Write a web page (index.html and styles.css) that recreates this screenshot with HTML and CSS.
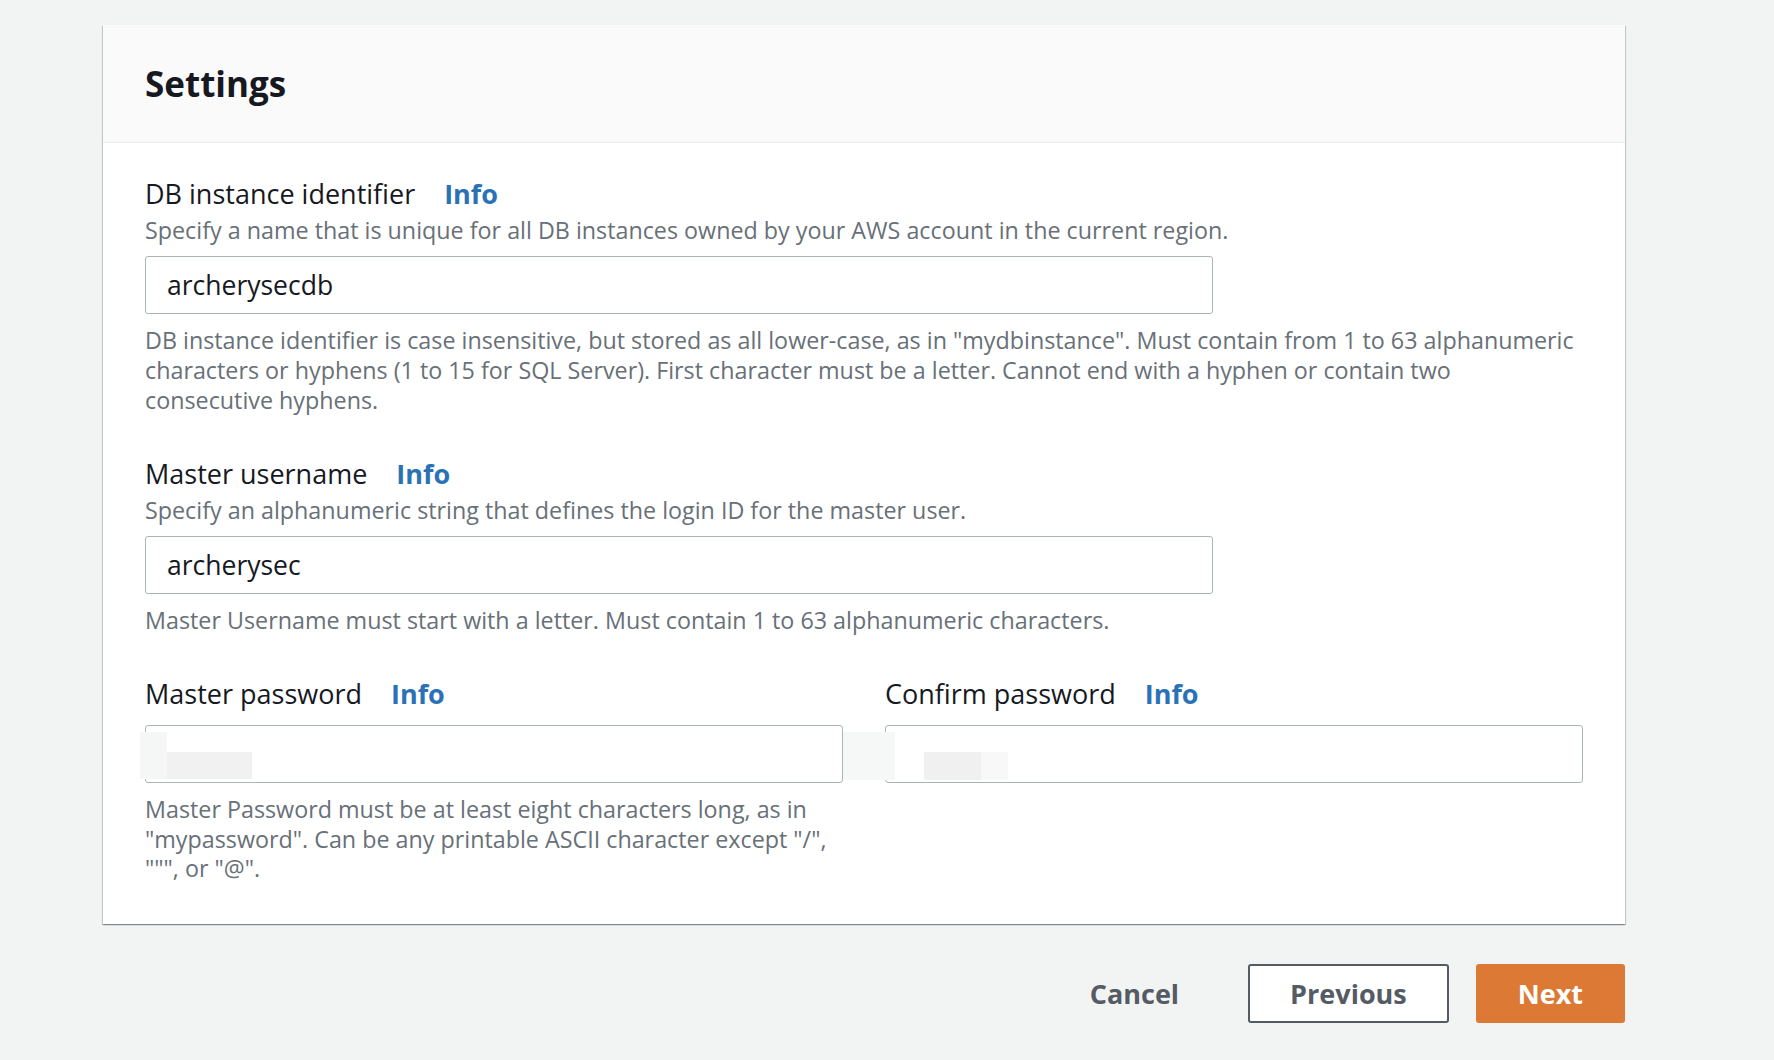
FILE: index.html
```html
<!DOCTYPE html>
<html lang="en">
<head>
<meta charset="utf-8">
<title>Settings</title>
<link rel="stylesheet" href="styles.css">
</head>
<body>
<div class="page">
  <section class="card">
    <header class="card-header">
      <h2 class="card-title">Settings</h2>
    </header>
    <div class="card-body">
      <div class="field">
        <div class="label-row"><label class="label">DB instance identifier</label><a class="info">Info</a></div>
        <div class="desc">Specify a name that is unique for all DB instances owned by your AWS account in the current region.</div>
        <input class="input input-wide" type="text" value="archerysecdb">
        <div class="hint">DB instance identifier is case insensitive, but stored as all lower-case, as in "mydbinstance". Must contain from 1 to 63 alphanumeric<br>characters or hyphens (1 to 15 for SQL Server). First character must be a letter. Cannot end with a hyphen or contain two<br>consecutive hyphens.</div>
      </div>
      <div class="field">
        <div class="label-row"><label class="label">Master username</label><a class="info">Info</a></div>
        <div class="desc">Specify an alphanumeric string that defines the login ID for the master user.</div>
        <input class="input input-wide" type="text" value="archerysec">
        <div class="hint">Master Username must start with a letter. Must contain 1 to 63 alphanumeric characters.</div>
      </div>
      <div class="field field-grid">
        <div class="col">
          <div class="label-row"><label class="label">Master password</label><a class="info">Info</a></div>
          <div class="control">
            <input class="input input-pw" type="password">
            <span class="smudge s1"></span>
            <span class="smudge s2"></span>
          </div>
          <div class="hint hint-tight">Master Password must be at least eight characters long, as in<br>"mypassword". Can be any printable ASCII character except "/",<br>""", or "@".</div>
        </div>
        <div class="col">
          <div class="label-row"><label class="label">Confirm password</label><a class="info">Info</a></div>
          <div class="control">
            <input class="input input-pw" type="password">
            <span class="smudge s4"></span>
            <span class="smudge s5"></span>
            <span class="smudge s6"></span>
          </div>
        </div>
      </div>
    </div>
  </section>
  <div class="actions">
    <button class="btn btn-link" type="button">Cancel</button>
    <button class="btn btn-normal" type="button">Previous</button>
    <button class="btn btn-primary" type="button">Next</button>
  </div>
</div>
</body>
</html>
```

FILE: styles.css
```css
* { box-sizing: border-box; }

body {
  margin: 0;
  background: #f2f3f3;
  font-family: "Open Sans", Lato, sans-serif;
  color: #16191f;
}

.page {
  padding: 25px 0 0 103px;
  width: 1625px;
}

.card {
  background: #ffffff;
  box-shadow: 0 1px 1px 0 rgba(0, 28, 36, 0.3), 1px 1px 1px 0 rgba(0, 28, 36, 0.15), -1px 1px 1px 0 rgba(0, 28, 36, 0.15);
}

.card-header {
  height: 118px;
  padding: 0 42px;
  background: #fafafa;
  border-bottom: 1px solid #eaeded;
  display: flex;
  align-items: center;
}

.card-title {
  margin: 0;
  font-size: 35px;
  font-weight: 700;
  color: #16191f;
}

.card-body {
  padding: 34px 42px 40px;
}

.field + .field {
  margin-top: 42px;
}

.label-row {
  display: flex;
  gap: 29px;
  font-size: 27px;
  line-height: 34px;
}

.label {
  color: #16191f;
}

.info {
  color: #2a72b5;
  font-weight: 700;
}

.desc {
  margin-top: 4px;
  font-size: 23.3px;
  line-height: 30px;
  color: #687078;
}

.input {
  display: block;
  margin-top: 11px;
  height: 58px;
  border: 1px solid #aab7b8;
  border-radius: 3px;
  padding: 0 21px;
  font-family: inherit;
  font-size: 26.5px;
  color: #16191f;
  background: #ffffff;
  outline: none;
}

.input-wide {
  width: 1068px;
}

.hint {
  margin-top: 11px;
  font-size: 23.3px;
  line-height: 30px;
  color: #687078;
}

.hint-tight {
  margin-top: 12px;
  line-height: 29.5px;
}

.field-grid {
  display: grid;
  grid-template-columns: 698px 698px;
  column-gap: 42px;
}

.control {
  position: relative;
  margin-top: 14px;
}

.control .input {
  margin-top: 0;
}

.input-pw {
  width: 698px;
}

.smudge {
  position: absolute;
  display: block;
}

.s1 { left: -5px; top: 7px; width: 27px; height: 47px; background: #f5f6f6; }
.s2 { left: 22px; top: 27px; width: 85px; height: 27px; background: #f1f1f1; }
.s4 { left: -42px; top: 7px; width: 52px; height: 48px; background: #f6f7f7; }
.s5 { left: 39px; top: 27px; width: 57px; height: 28px; background: #f0f0f0; }
.s6 { left: 96px; top: 27px; width: 27px; height: 28px; background: #f8f8f8; }

.actions {
  display: flex;
  justify-content: flex-end;
  gap: 27px;
  margin-top: 40px;
}

.btn {
  height: 59px;
  padding: 0 40px;
  border: 2px solid transparent;
  border-radius: 3px;
  font-family: inherit;
  font-size: 27px;
  font-weight: 700;
  color: #545b64;
  background: transparent;
}

.btn-normal {
  border-color: #545b64;
  background: #ffffff;
}

.btn-primary {
  background: #dc7934;
  border-color: #dc7934;
  color: #ffffff;
}
```
